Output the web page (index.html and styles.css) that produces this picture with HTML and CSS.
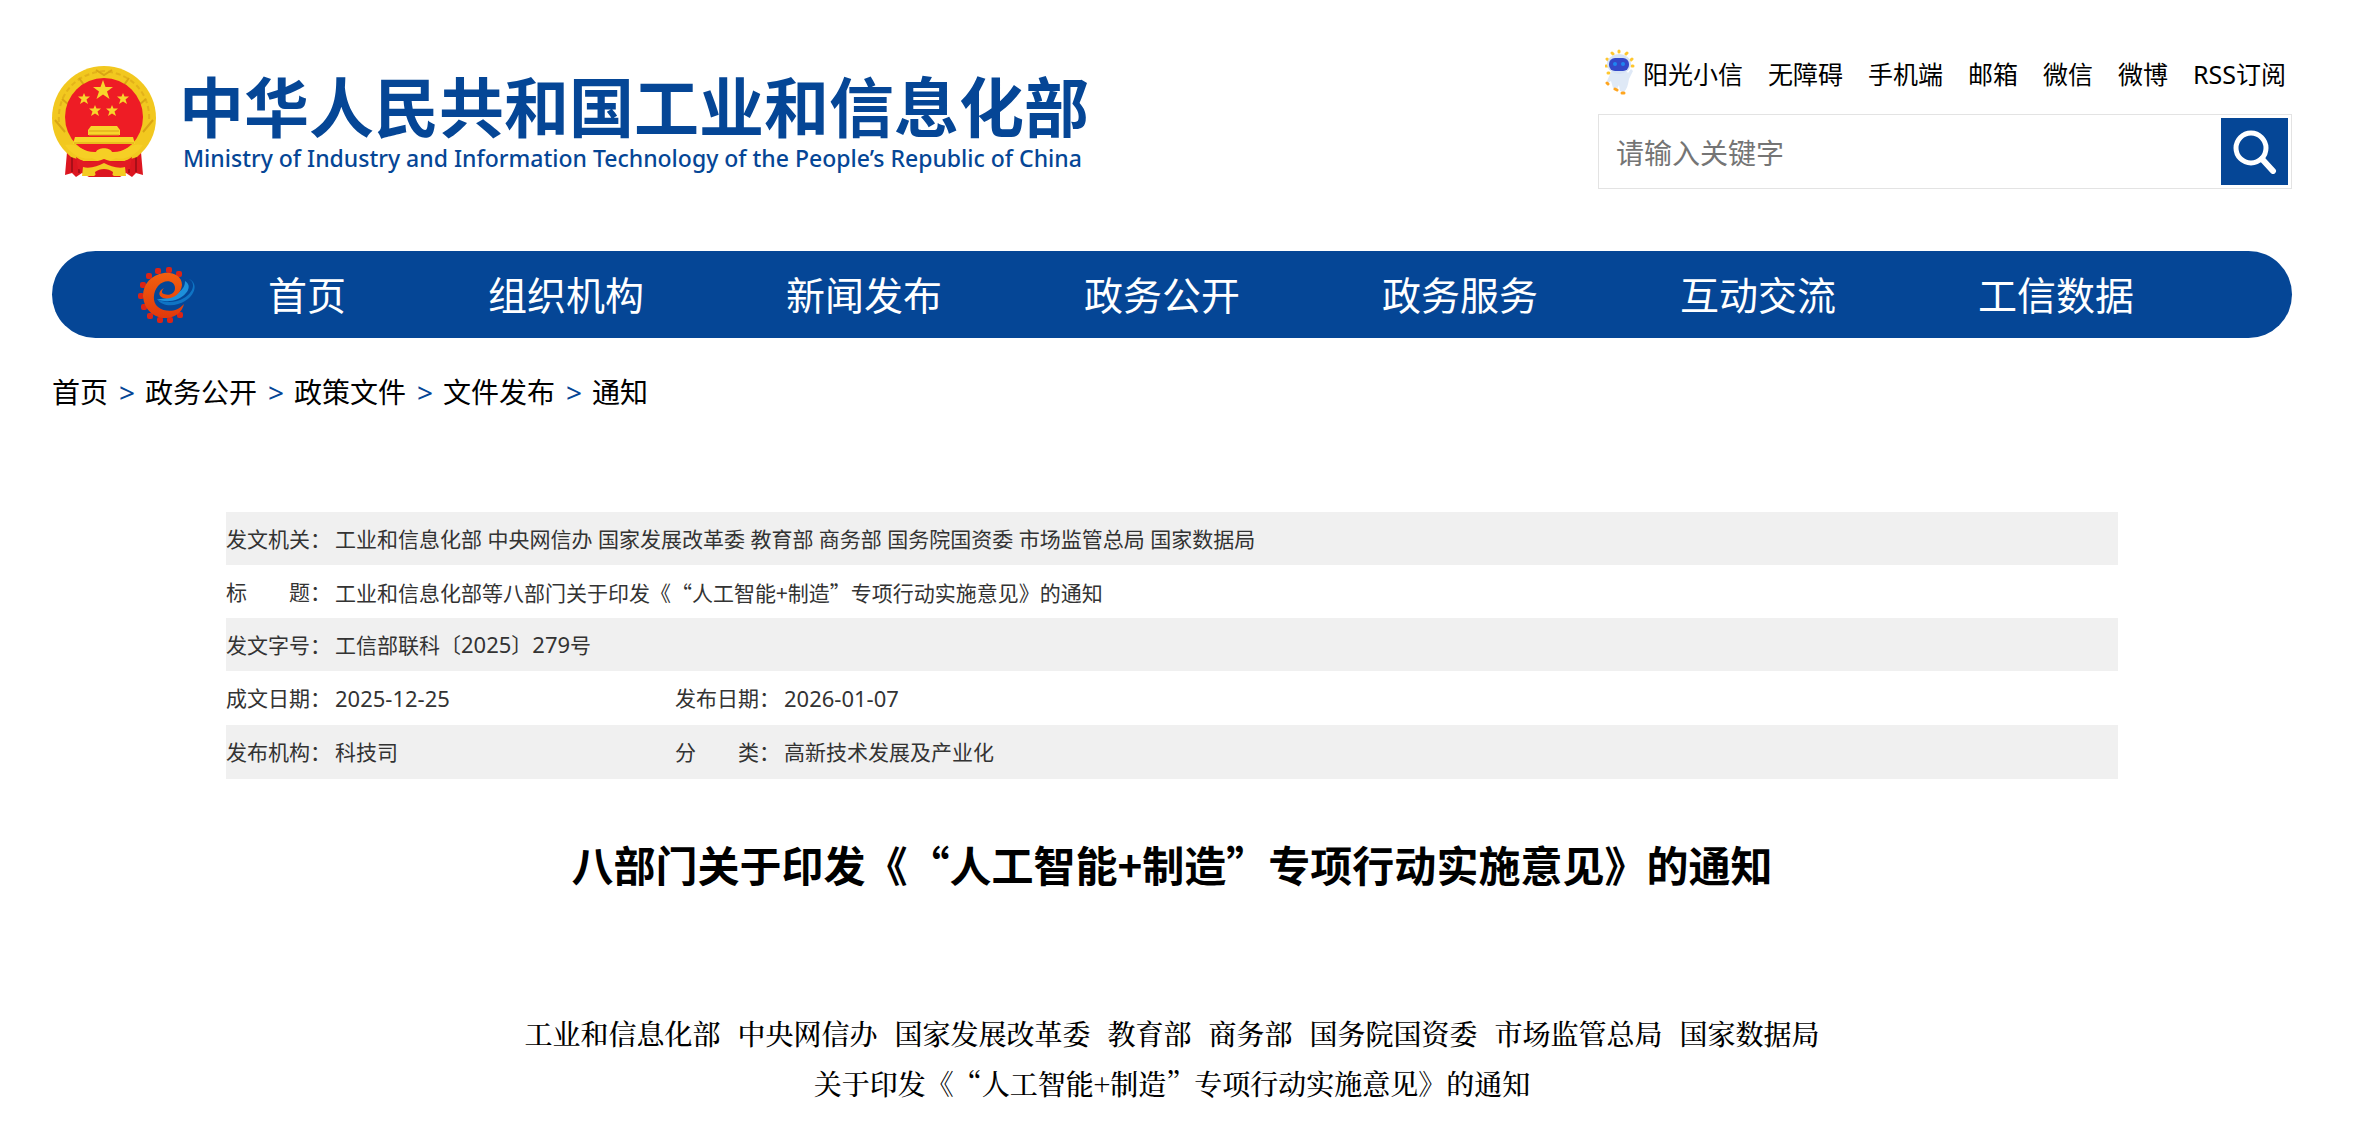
FILE: index.html
```html
<!DOCTYPE html>
<html lang="zh-CN">
<head>
  <meta charset="UTF-8">
  <meta name="viewport" content="width=device-width, initial-scale=1.0">
  <title>八部门关于印发《“人工智能+制造”专项行动实施意见》的通知</title>
  <link rel="stylesheet" href="styles.css">
</head>
<body>
  <div class="page">
    <header class="header">
      <a class="brand" href="#">
        <svg class="emblem" viewBox="0 0 104 112" aria-hidden="true">
          <path d="M15 86L89 86L91 109L84 107L80 111L74 107L68 111H37L30 107L24 111L20 107L13 109Z" fill="#dc1620"/>
          <path d="M20 90V106M27 91V107M77 91V107M84 90V106" stroke="#a80f18" stroke-width="2"/>
          <path d="M52 0C80 0 104 23 104 52C104 68 97 81 85 91L73 95H31L19 91C7 81 0 68 0 52C0 23 24 0 52 0Z" fill="#f2c81f"/>
          <path d="M7 56C5 32 20 8 52 5C84 8 99 32 97 56" fill="none" stroke="#e3b21a" stroke-width="2" stroke-dasharray="5 3"/>
          <path d="M3 54L13 66M101 54L91 66M10 33L17 39M94 33L87 39M27 12L32 19M77 12L72 19M44 4L52 9L60 4" fill="none" stroke="#d9a514" stroke-width="2"/>
          <circle cx="52" cy="51" r="39" fill="#ee1c25"/>
          <g fill="#f8d52b">
            <path d="M51 14L53.500 21H61L55 25.500L57.500 33L51 28.500L44.500 33L47 25.500L41 21H48.500Z"/>
            <path d="M32 27L33.500 30.500H38L34.500 33.500L36 38L32 35.500L28 38L29.500 33.500L26 30.500H30.500Z"/>
            <path d="M71 27L72.500 30.500H77L73.500 33.500L75 38L71 35.500L67 38L68.500 33.500L65 30.500H69.500Z"/>
            <path d="M43 39L44.500 42.500H49L45.500 45.500L47 50L43 47.500L39 50L40.500 45.500L37 42.500H41.500Z"/>
            <path d="M60 39L61.500 42.500H66L62.500 45.500L64 50L60 47.500L56 50L57.500 45.500L54 42.500H58.500Z"/>
            <path d="M39 60H65L68 64V69H36V64Z"/>
            <path d="M23 71H81L83 78H21Z"/>
          </g>
          <path d="M37 65H67M37 69H67M22 77H82" stroke="#d9a514" stroke-width="1"/>
          <path d="M13 79C25 76 31 87 44 86C46 81 58 81 60 86C73 87 79 76 91 79C83 91 71 94 64 92C58 96 46 96 40 92C33 94 21 91 13 79Z" fill="#f6cf25"/>
          <path d="M24 91C35 99 43 96 52 93C61 96 69 99 80 91L78 103C66 106 60 101 52 98C44 101 38 106 26 103Z" fill="#e21b23"/>
          <path d="M31 101C38 103 46 100 52 97C58 100 66 103 73 101L74 110H62C58 106 46 106 42 110H30Z" fill="#f4cb22"/>
          <path d="M43 106C48 102 56 102 61 106L60 111H44Z" fill="#dc1620"/>
        </svg>
        <span class="brand-text">
          <span class="brand-cn">中华人民共和国工业和信息化部</span>
          <span class="brand-en">Ministry of Industry and Information Technology of the People’s Republic of China</span>
        </span>
      </a>
      <div class="tools">
        <ul class="quick-links">
          <li>
            <a class="robot-link" href="#">
              <svg class="robot" viewBox="0 0 30 48" aria-hidden="true">
                <g stroke="#ffc72e" stroke-width="3" stroke-linecap="round">
                  <path d="M7 4L8 5M14 2V3M22 4L21 5M2 10L3 11M27 10L26 11M1 17H2M28 17H27M3 24H4"/>
                </g>
                <path d="M6 23C8 20 21 20 23 24L26 20L28 22L24 30C23 36 22 40 19 43L15 42L14 36L12 40L8 39L6 32L3 34L2 32Z" fill="#dfe9f6"/>
                <ellipse cx="14" cy="15" rx="12" ry="10" fill="#d6e3f5"/>
                <rect x="4" y="9" width="20" height="13" rx="6" fill="#3448c8"/>
                <circle cx="10" cy="15" r="2" fill="#1e86f0"/>
                <circle cx="18" cy="15" r="2" fill="#1e86f0"/>
                <path d="M2 34L3 35M10 40L12 41M17 44L19 44" stroke="#ffa51f" stroke-width="3" stroke-linecap="round"/>
              </svg>
              阳光小信
            </a>
          </li>
          <li><a href="#">无障碍</a></li>
          <li><a href="#">手机端</a></li>
          <li><a href="#">邮箱</a></li>
          <li><a href="#">微信</a></li>
          <li><a href="#">微博</a></li>
          <li><a href="#">RSS订阅</a></li>
        </ul>
        <form class="search">
          <input class="search-input" type="text" placeholder="请输入关键字" aria-label="请输入关键字">
          <button class="search-btn" type="button" aria-label="搜索">
            <svg viewBox="0 0 44 44" aria-hidden="true">
              <circle cx="18" cy="18" r="15" fill="none" stroke="#fff" stroke-width="5"/>
              <path d="M29 29L40 41" stroke="#fff" stroke-width="6" stroke-linecap="round"/>
            </svg>
          </button>
        </form>
      </div>
    </header>

    <nav class="nav">
      <svg class="nav-logo" viewBox="0 0 58 58" aria-hidden="true">
        <defs>
          <linearGradient id="gear" x1="0" y1="0" x2="0" y2="1">
            <stop offset="0" stop-color="#f2600f"/>
            <stop offset="1" stop-color="#e0380b"/>
          </linearGradient>
        </defs>
        <g fill="#da2416">
          <rect x="8" y="7" width="6" height="6" rx="2"/>
          <rect x="17" y="2" width="6" height="6" rx="2"/>
          <rect x="28" y="1" width="6" height="6" rx="2"/>
          <rect x="38" y="5" width="6" height="6" rx="2"/>
          <rect x="2" y="16" width="6" height="6" rx="2"/>
          <rect x="0" y="27" width="6" height="6" rx="2"/>
          <rect x="3" y="38" width="6" height="6" rx="2"/>
          <rect x="9" y="47" width="6" height="6" rx="2"/>
          <rect x="19" y="51" width="6" height="6" rx="2"/>
          <rect x="29" y="51" width="6" height="6" rx="2"/>
          <rect x="39" y="46" width="6" height="6" rx="2"/>
        </g>
        <path d="M46 12C59 13 57 26 46 32C38 37 26 37 19 33C25 42 39 40 47 35C59 28 61 13 46 12Z" fill="#0f74c4"/>
        <path d="M47 15C55 20 49 29 40 33C33 36 25 36 19 33C27 33 35 31 40 27C45 23 47 20 47 15Z" fill="#1d90da"/>
        <path d="M46 38C39 46 28 47 20 41C14 36 15 26 20 20C27 12 37 15 37 22C37 28 31 30 26 28C22 27 25 23 26 22C20 25 20 30 25 32C33 34 43 29 44 19C44 10 35 6 26 7C13 9 5 18 5 30C6 45 18 53 29 52C38 51 44 46 46 38Z" fill="url(#gear)"/>
      </svg>
      <ul class="nav-list">
        <li><a href="#">首页</a></li>
        <li><a href="#">组织机构</a></li>
        <li><a href="#">新闻发布</a></li>
        <li><a href="#">政务公开</a></li>
        <li><a href="#">政务服务</a></li>
        <li><a href="#">互动交流</a></li>
        <li><a href="#">工信数据</a></li>
      </ul>
    </nav>

    <div class="breadcrumb">
      <a href="#">首页</a><span>&gt;</span>
      <a href="#">政务公开</a><span>&gt;</span>
      <a href="#">政策文件</a><span>&gt;</span>
      <a href="#">文件发布</a><span>&gt;</span>
      <a href="#">通知</a>
    </div>

    <main class="article">
      <table class="info">
        <colgroup>
          <col class="col-label">
          <col class="col-value">
          <col class="col-label">
          <col>
        </colgroup>
        <tr>
          <th>发文机关：</th>
          <td colspan="3">工业和信息化部 中央网信办 国家发展改革委 教育部 商务部 国务院国资委 市场监管总局 国家数据局</td>
        </tr>
        <tr>
          <th>标　　题：</th>
          <td class="cjk" colspan="3">工业和信息化部等八部门关于印发《“人工智能+制造”专项行动实施意见》的通知</td>
        </tr>
        <tr>
          <th>发文字号：</th>
          <td colspan="3">工信部联科〔<span class="num">2025</span>〕<span class="num">279</span>号</td>
        </tr>
        <tr class="tall">
          <th>成文日期：</th>
          <td class="num">2025-12-25</td>
          <th>发布日期：</th>
          <td class="num">2026-01-07</td>
        </tr>
        <tr class="tall">
          <th>发布机构：</th>
          <td>科技司</td>
          <th>分　　类：</th>
          <td>高新技术发展及产业化</td>
        </tr>
      </table>

      <h1 class="title">八部门关于印发《“人工智能+制造”专项行动实施意见》的通知</h1>

      <div class="content">
        <p class="agencies">
          <span>工业和信息化部</span>
          <span>中央网信办</span>
          <span>国家发展改革委</span>
          <span>教育部</span>
          <span>商务部</span>
          <span>国务院国资委</span>
          <span>市场监管总局</span>
          <span>国家数据局</span>
        </p>
        <p>关于印发《“人工智能+制造”专项行动实施意见》的通知</p>
      </div>
    </main>
  </div>
</body>
</html>
```
FILE: styles.css
```css
* {
  box-sizing: border-box;
}
body {
  margin: 0;
  background: #fff;
  color: #000;
  font-family: "Noto Sans", "Noto Sans CJK SC", sans-serif;
  text-spacing-trim: space-all;
}
a {
  color: inherit;
  text-decoration: none;
}
ul {
  list-style: none;
  margin: 0;
  padding: 0;
}
.page {
  padding: 0 67px 0 52px;
}

/* header */
.header {
  display: flex;
  justify-content: space-between;
  align-items: flex-start;
  height: 251px;
  padding-top: 48px;
}
.brand {
  display: flex;
  gap: 23px;
  padding-top: 18px;
  color: #054696;
}
.emblem {
  width: 104px;
  height: 112px;
}
.brand-text {
  display: flex;
  flex-direction: column;
  white-space: nowrap;
}
.brand-cn {
  font-family: "Noto Sans CJK SC", sans-serif;
  font-size: 65px;
  font-weight: 700;
  line-height: 76px;
}
.brand-en {
  padding-left: 4px;
  font-size: 23px;
  font-weight: 500;
  line-height: 32px;
}
.tools {
  width: 694px;
}
.quick-links {
  display: flex;
  justify-content: flex-end;
  align-items: center;
  gap: 25px;
  height: 50px;
  margin-bottom: 16px;
  padding-right: 6px;
  font-size: 25px;
  white-space: nowrap;
}
.robot-link {
  display: flex;
  align-items: center;
  gap: 8px;
}
.robot {
  width: 30px;
  height: 48px;
}
.search {
  display: flex;
  height: 75px;
  padding: 3px;
  border: 1px solid #e3e3e3;
}
.search-input {
  flex: 1;
  min-width: 0;
  padding: 2px 14px 0;
  border: 0;
  outline: 0;
  background: none;
  font-family: inherit;
  font-size: 28px;
}
.search-input::placeholder {
  color: #757575;
}
.search-btn {
  display: flex;
  justify-content: center;
  align-items: center;
  width: 67px;
  padding: 0;
  border: 0;
  background: #054696;
  cursor: pointer;
}
.search-btn svg {
  width: 44px;
  height: 44px;
}

/* nav */
.nav {
  display: flex;
  align-items: center;
  gap: 72px;
  height: 87px;
  padding-left: 86px;
  border-radius: 44px;
  background: #054696;
}
.nav-logo {
  width: 58px;
  height: 58px;
}
.nav-list {
  display: flex;
  gap: 142px;
  padding-bottom: 4px;
  color: #fff;
  font-size: 39px;
  white-space: nowrap;
}
.breadcrumb {
  display: flex;
  gap: 11px;
  margin-top: 34px;
  font-size: 28px;
  line-height: 40px;
}
.breadcrumb span {
  width: 15px;
  color: #054696;
}

/* article */
.article {
  padding: 0 174px;
}
.info {
  width: 100%;
  margin-top: 100px;
  border-collapse: collapse;
  table-layout: fixed;
  color: #333;
  font-size: 21px;
  line-height: 30px;
}
.col-label {
  width: 109px;
}
.col-value {
  width: 340px;
}
.info tr {
  height: 53px;
}
.info tr.tall {
  height: 54px;
}
.info tr:nth-child(odd) {
  background: #f0f0f0;
}
.info th {
  padding: 0;
  font-weight: 400;
  text-align: left;
  white-space: nowrap;
}
.info td {
  padding: 0;
}
.info .cjk {
  font-family: "Noto Sans CJK SC", sans-serif;
}
.info .num {
  font-size: 22px;
}
.title {
  margin: 53px 0 0;
  font-family: "Noto Sans CJK SC", sans-serif;
  font-size: 42px;
  font-weight: 700;
  line-height: 64px;
  text-align: center;
}
.content {
  margin-top: 112px;
  font-family: "Noto Serif CJK SC", "Noto Sans CJK SC", serif;
  font-size: 28px;
  font-weight: 500;
  line-height: 50px;
  text-align: center;
}
.content p {
  margin: 0;
}
.agencies {
  display: flex;
  justify-content: center;
  gap: 17px;
}
```
